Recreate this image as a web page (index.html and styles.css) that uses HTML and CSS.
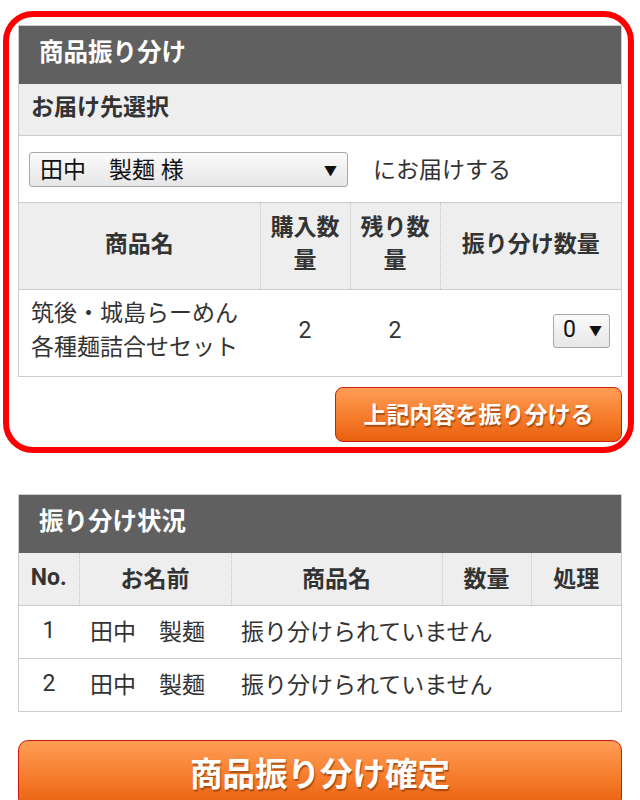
FILE: index.html
```html
<!DOCTYPE html>
<html lang="ja">
<head>
<meta charset="utf-8">
<title>商品振り分け</title>
<link rel="stylesheet" href="styles.css">
</head>
<body>
<div class="frame">
  <section class="box">
    <h2 class="box-title">商品振り分け</h2>
    <div class="sub-title">お届け先選択</div>
    <div class="dest-row">
      <div class="select select-wide"><span class="select-text">田中　製麺 様</span><span class="arrow">▼</span></div>
      <span class="dest-text">にお届けする</span>
    </div>
    <table class="grid grid-items">
      <colgroup>
        <col class="c-name"><col class="c-num"><col class="c-num"><col class="c-qty">
      </colgroup>
      <thead>
        <tr><th>商品名</th><th>購入数量</th><th>残り数量</th><th>振り分け数量</th></tr>
      </thead>
      <tbody>
        <tr>
          <td class="item-name">筑後・城島らーめん<br>各種麺詰合せセット</td>
          <td class="num">2</td>
          <td class="num">2</td>
          <td class="qty"><div class="select select-small"><span class="select-text">0</span><span class="arrow">▼</span></div></td>
        </tr>
      </tbody>
    </table>
  </section>
  <div class="actions"><button class="btn btn-split" type="button">上記内容を振り分ける</button></div>
</div>

<section class="box box-status">
  <h2 class="box-title">振り分け状況</h2>
  <table class="grid grid-status">
    <colgroup>
      <col class="s-no"><col class="s-name"><col class="s-item"><col class="s-qty"><col class="s-act">
    </colgroup>
    <thead>
      <tr><th>No.</th><th>お名前</th><th>商品名</th><th>数量</th><th>処理</th></tr>
    </thead>
    <tbody>
      <tr><td class="no">1</td><td class="person">田中　製麺</td><td class="status" colspan="3">振り分けられていません</td></tr>
      <tr><td class="no">2</td><td class="person">田中　製麺</td><td class="status" colspan="3">振り分けられていません</td></tr>
    </tbody>
  </table>
</section>

<div class="final">
  <button class="btn btn-confirm" type="button">商品振り分け確定</button>
</div>
</body>
</html>
```
FILE: styles.css
```css
body {
  margin: 0;
  background: #fff;
  font-family: Roboto, "Noto Sans CJK JP", sans-serif;
  color: #333;
}

.frame {
  margin: 11px 6px 0 3px;
  border: 6px solid #ff0000;
  border-radius: 30px;
  padding: 8px 6px 5px 9px;
}

.box {
  border: 1px solid #cccccc;
  background: #fff;
}

.box-title {
  margin: 0;
  height: 58px;
  line-height: 54px;
  padding-left: 20px;
  background: #606060;
  color: #fff;
  font-size: 24.5px;
  font-weight: bold;
}

.sub-title {
  height: 51px;
  line-height: 47px;
  padding-left: 12px;
  background: #eeeeee;
  border-bottom: 1px solid #cccccc;
  font-size: 23px;
  font-weight: bold;
}

.dest-row {
  height: 66px;
  display: flex;
  align-items: center;
  padding-left: 10px;
  border-bottom: 1px solid #cccccc;
}

.select {
  display: flex;
  align-items: center;
  justify-content: space-between;
  box-sizing: border-box;
  border: 1px solid #a8a8a8;
  border-radius: 3px;
  background: linear-gradient(#fbfbfb, #e6e6e6);
  color: #111;
  font-size: 23px;
}

.select-text {
  margin-top: -3px;
}

.select-wide {
  width: 319px;
  height: 35px;
  padding: 0 10px 0 10px;
  margin-top: 1px;
}

.select-small {
  width: 57px;
  height: 34px;
  padding: 0 7px 0 9px;
  margin-left: auto;
}

.arrow {
  font-size: 13px;
  color: #111;
}

.dest-text {
  margin-left: 25px;
  font-size: 23px;
  margin-top: -3px;
}

.grid {
  width: 100%;
  border-collapse: collapse;
  table-layout: fixed;
}

.grid th {
  background: #eeeeee;
  font-size: 23px;
  font-weight: bold;
  text-align: center;
  vertical-align: middle;
  border-left: 1px dotted #c4c4c4;
  border-bottom: 1px solid #cccccc;
}

.grid th:first-child {
  border-left: none;
}

.grid td {
  font-size: 23px;
  vertical-align: middle;
}

.c-name { width: 241px; }
.c-num { width: 90px; }
.c-qty { width: 181px; }

.grid-items th {
  height: 82px;
  padding: 0 5px 4px;
  line-height: 33px;
}

.grid-items td {
  height: 82px;
  padding: 0 0 4px;
  line-height: 34px;
}

.item-name {
  padding-left: 12px !important;
}

.num {
  text-align: center;
}

.qty {
  padding-right: 11px !important;
}

.actions {
  display: flex;
  justify-content: flex-end;
  margin-top: 10px;
}

.btn {
  box-sizing: border-box;
  border: 1px solid #cf1a0c;
  background: linear-gradient(#ff9e55, #f67c2c 55%, #e8600e);
  color: #fff;
  font-family: Roboto, "Noto Sans CJK JP", sans-serif;
  font-weight: bold;
  text-shadow: 1px 2px 1px rgba(110, 40, 0, 0.55);
  cursor: pointer;
  padding: 0 0 4px;
}

.btn-split {
  width: 287px;
  height: 55px;
  border-radius: 8px;
  font-size: 23px;
}

.box-status {
  margin: 41px 18px 0 18px;
}

.s-no { width: 60px; }
.s-name { width: 152px; }
.s-item { width: 211px; }
.s-qty { width: 89px; }
.s-act { width: 90px; }

.grid-status th {
  height: 48px;
  padding: 0 0 4px;
}

.grid-status td {
  height: 48px;
  padding: 0 0 4px;
  border-bottom: 1px solid #cccccc;
}

.grid-status tbody tr:last-child td {
  border-bottom: none;
}

.no {
  text-align: center;
}

.person {
  padding-left: 11px !important;
  white-space: nowrap;
}

.status {
  padding-left: 10px !important;
  white-space: nowrap;
}

.final {
  margin: 28px 18px 0 18px;
}

.btn-confirm {
  width: 100%;
  height: 68px;
  border-radius: 10px;
  font-size: 32.5px;
  padding-bottom: 6px;
}
```
